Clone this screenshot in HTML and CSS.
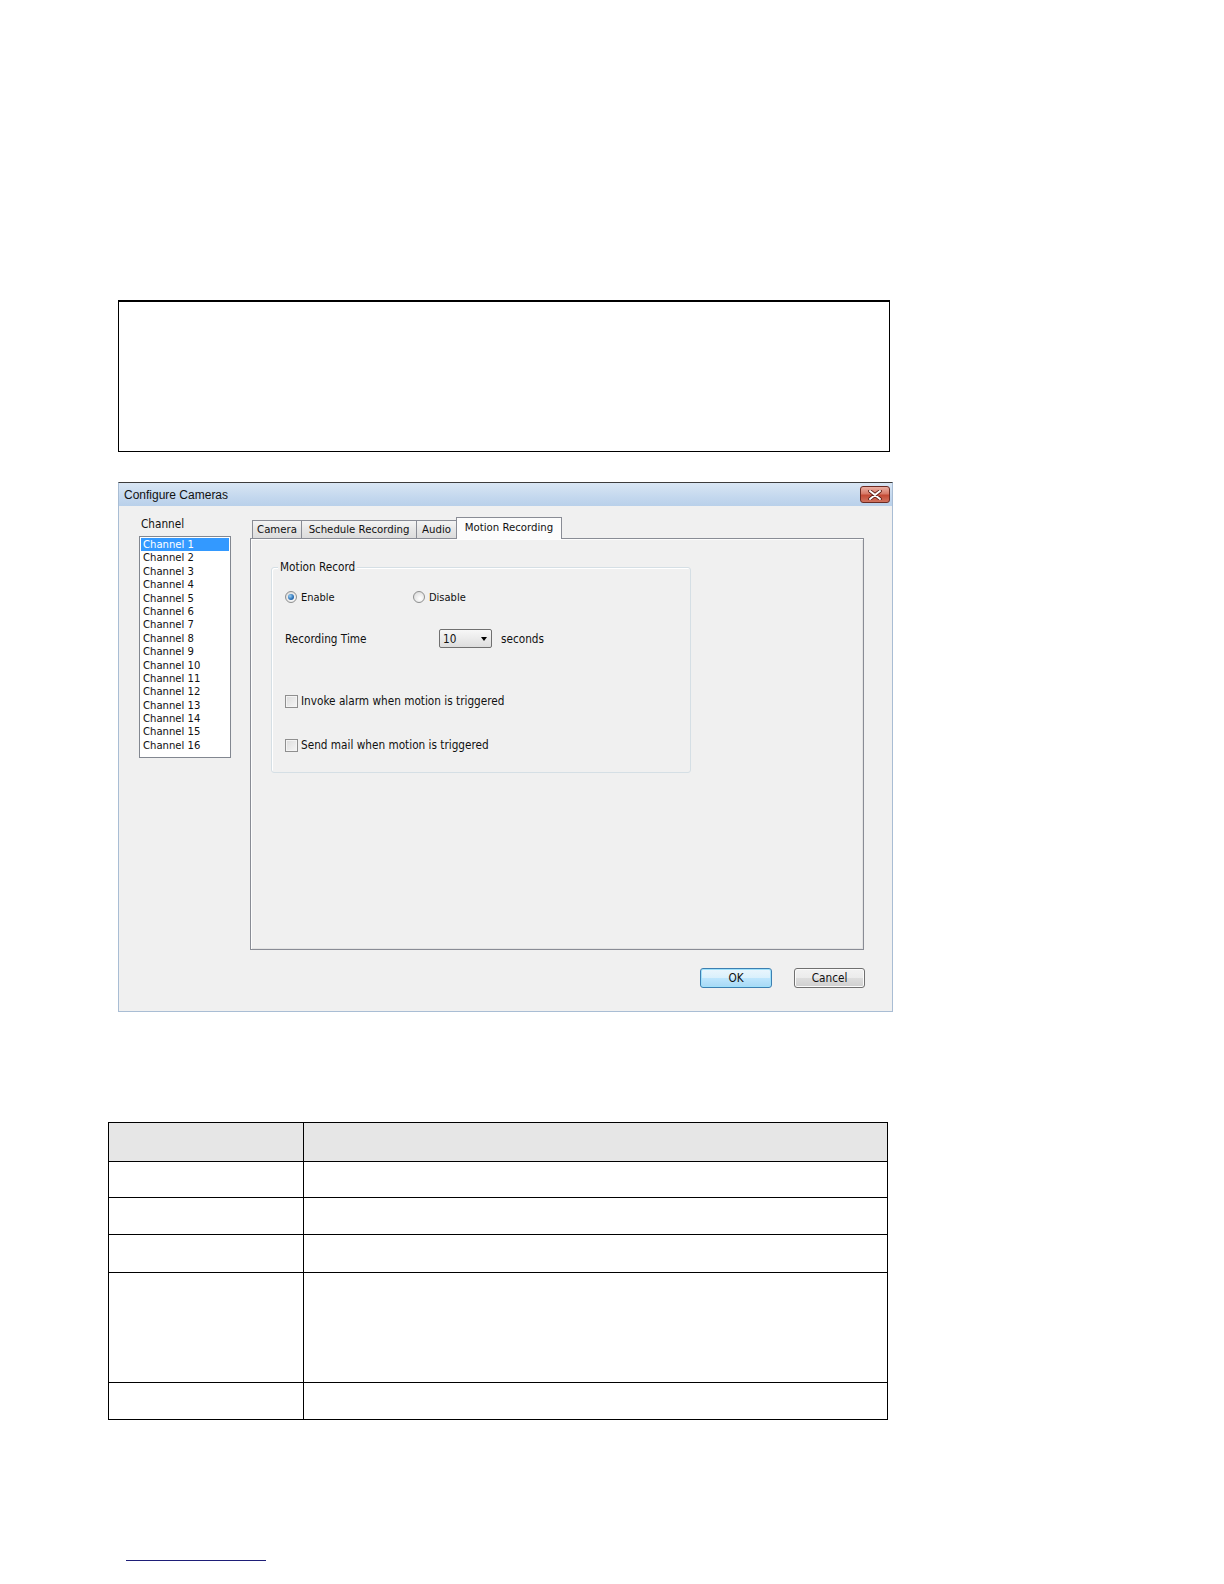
FILE: index.html
```html
<!DOCTYPE html>
<html lang="en">
<head>
<meta charset="utf-8">
<title>Configure Cameras</title>
<link rel="stylesheet" href="styles.css">
</head>
<body>
<div class="page">
  <div class="note-box"></div>

  <div class="dialog">
    <div class="titlebar">
      <span class="title">Configure Cameras</span>
      <span class="close-btn">
        <svg width="14" height="10" viewBox="0 0 14 10" aria-hidden="true">
          <path d="M2 1 L12 9 M12 1 L2 9" stroke="#5a1a12" stroke-width="3.6" stroke-linecap="round"/>
          <path d="M2 1 L12 9 M12 1 L2 9" stroke="#ffffff" stroke-width="2" stroke-linecap="round"/>
        </svg>
      </span>
    </div>
    <div class="dlg-body">
      <div class="main">
        <div class="channel-col">
          <div class="channel-label">Channel</div>
          <ul class="listbox">
            <li class="sel">Channel 1</li>
            <li>Channel 2</li>
            <li>Channel 3</li>
            <li>Channel 4</li>
            <li>Channel 5</li>
            <li>Channel 6</li>
            <li>Channel 7</li>
            <li>Channel 8</li>
            <li>Channel 9</li>
            <li>Channel 10</li>
            <li>Channel 11</li>
            <li>Channel 12</li>
            <li>Channel 13</li>
            <li>Channel 14</li>
            <li>Channel 15</li>
            <li>Channel 16</li>
          </ul>
        </div>
        <div class="tabs-col">
          <div class="tabs">
            <div class="tab tab-camera">Camera</div>
            <div class="tab tab-schedule">Schedule Recording</div>
            <div class="tab tab-audio">Audio</div>
            <div class="tab tab-motion active">Motion Recording</div>
          </div>
          <div class="panel">
            <div class="group">
              <span class="legend">Motion Record</span>
              <div class="radio-row">
                <label class="opt opt-first"><span class="radio checked"></span>Enable</label>
                <label class="opt"><span class="radio"></span>Disable</label>
              </div>
              <div class="time-row">
                <span class="time-label">Recording Time</span>
                <span class="select"><span class="select-val">10</span><span class="arrow"></span></span>
                <span class="unit">seconds</span>
              </div>
              <label class="check-row first-check"><span class="checkbox"></span>Invoke alarm when motion is triggered</label>
              <label class="check-row second-check"><span class="checkbox"></span>Send mail when motion is triggered</label>
            </div>
          </div>
        </div>
      </div>
      <div class="buttons">
        <span class="btn btn-default">OK</span>
        <span class="btn btn-cancel">Cancel</span>
      </div>
    </div>
  </div>

  <table class="spec">
    <tr class="r-head"><th class="c1"></th><th></th></tr>
    <tr class="r1"><td></td><td></td></tr>
    <tr class="r2"><td></td><td></td></tr>
    <tr class="r3"><td></td><td></td></tr>
    <tr class="r4"><td></td><td></td></tr>
    <tr class="r5"><td></td><td></td></tr>
  </table>

  <div class="footnote-rule"></div>
</div>
</body>
</html>
```

FILE: styles.css
```css
* { box-sizing: border-box; }

html, body {
  margin: 0;
  padding: 0;
  background: #ffffff;
}

body {
  width: 1224px;
  height: 1584px;
  overflow: hidden;
  font-family: "Liberation Sans", Arial, sans-serif;
  color: #000;
}

.page {
  padding: 300px 0 0 108px;
}

.note-box {
  margin-left: 10px;
  width: 772px;
  height: 152px;
  border: 1px solid #000;
  border-top-width: 2px;
}

/* ---------- dialog ---------- */
.dialog {
  margin: 30px 0 0 10px;
  width: 775px;
  height: 530px;
  border: 1px solid #a9bdd4;
  border-top-color: #3c3c3c;
  background: #f0f0f0;
  display: flex;
  flex-direction: column;
  font-family: "DejaVu Sans Condensed", "Liberation Sans", sans-serif;
  font-size: 11.7px;
  color: #111;
}

.titlebar {
  flex: none;
  height: 23px;
  display: flex;
  align-items: center;
  justify-content: space-between;
  padding: 0 2px 0 5px;
  background: linear-gradient(#d9e6f4, #c4d8ee 60%, #b9d0ea);
}

.title {
  font-family: "Liberation Sans", Arial, sans-serif;
  font-size: 12px;
}

.close-btn {
  width: 30px;
  height: 17px;
  border: 1px solid #6b2a22;
  border-radius: 3px;
  background: linear-gradient(#eab0a4, #d77a68 45%, #c44a35 55%, #d0735f);
  display: flex;
  align-items: center;
  justify-content: center;
}

.dlg-body {
  flex: 1;
  padding: 11px 27px 0 20px;
  display: flex;
  flex-direction: column;
}

.main {
  display: flex;
  gap: 19px;
}

/* channel list */
.channel-col {
  width: 92px;
  flex: none;
}

.channel-label {
  height: 19px;
  line-height: 14px;
  padding-left: 2px;
}

.listbox {
  margin: 0;
  padding: 1px;
  list-style: none;
  height: 222px;
  border: 1px solid #828790;
  background: #fff;
  font-size: 11.2px;
}

.listbox li {
  height: 13.4px;
  line-height: 13.4px;
  padding-left: 2px;
  white-space: nowrap;
}

.listbox li.sel {
  background: #3399ff;
  color: #fff;
}

/* tabs */
.tabs-col {
  width: 614px;
  flex: none;
}

.tabs {
  position: relative;
  z-index: 1;
  height: 21px;
  display: flex;
  align-items: flex-end;
  padding-left: 2px;
  font-size: 11.3px;
}

.tab {
  height: 18px;
  line-height: 17px;
  text-align: center;
  border: 1px solid #898c95;
  border-bottom: none;
  margin-right: -1px;
  background: linear-gradient(#f4f4f4, #e6e6e6 50%, #dcdcdc);
  white-space: nowrap;
}

.tab-camera { width: 50px; }
.tab-schedule { width: 116px; }
.tab-audio { width: 41px; }
.tab-motion { width: 106px; }

.tab.active {
  height: 22px;
  line-height: 19px;
  margin-bottom: -1px;
  background: #fcfcfc;
}

.panel {
  height: 412px;
  border: 1px solid #898c95;
  background: #f0f0f0;
  box-shadow: inset 1px 1px #fdfdfd, inset -1px -1px #e3e3e3;
  padding: 28px 0 0 20px;
}

.group {
  position: relative;
  width: 420px;
  height: 206px;
  border: 1px solid #d5dfe5;
  border-radius: 3px;
  padding: 21px 0 0 13px;
  box-shadow: 1px 1px #fff inset;
}

.legend {
  position: absolute;
  top: -8px;
  left: 6px;
  padding: 0 2px;
  line-height: 14px;
  background: #f0f0f0;
}

.radio-row {
  display: flex;
  align-items: center;
  height: 16px;
  font-size: 11px;
}

.opt {
  display: flex;
  align-items: center;
  gap: 4px;
}

.opt-first {
  width: 128px;
}

.radio {
  position: relative;
  width: 12px;
  height: 12px;
  border-radius: 50%;
  border: 1px solid #8e8f8f;
  background: radial-gradient(circle at 60% 65%, #ffffff, #e6e6e6 60%, #d0d0d0);
}

.radio.checked::after {
  content: "";
  position: absolute;
  left: 2px;
  top: 2px;
  width: 6px;
  height: 6px;
  border-radius: 50%;
  background: radial-gradient(circle at 35% 35%, #9ad0f4, #2a6fb5 60%, #1c4f8a);
}

.time-row {
  display: flex;
  align-items: center;
  height: 19px;
  margin-top: 24px;
}

.time-label {
  width: 154px;
}

.select {
  width: 53px;
  height: 19px;
  border: 1px solid #707070;
  border-radius: 2px;
  background: linear-gradient(#f7f7f7, #ebebeb 50%, #dddddd);
  display: flex;
  align-items: center;
  justify-content: space-between;
  padding: 0 4px 0 3px;
}

.arrow {
  width: 0;
  height: 0;
  border-left: 3.5px solid transparent;
  border-right: 3.5px solid transparent;
  border-top: 4px solid #000;
}

.unit {
  margin-left: 9px;
}

.check-row {
  display: flex;
  align-items: center;
  gap: 3px;
  height: 14px;
}

.first-check {
  margin-top: 46px;
}

.second-check {
  margin-top: 30px;
}

.checkbox {
  width: 13px;
  height: 13px;
  border: 1px solid #8f8f8f;
  background: linear-gradient(135deg, #dcdcdc, #f6f6f6);
  box-shadow: inset 0 0 0 1px #f4f4f4;
}

/* buttons */
.buttons {
  display: flex;
  justify-content: flex-end;
  gap: 22px;
  margin-top: 18px;
}

.btn {
  height: 20px;
  display: flex;
  align-items: center;
  justify-content: center;
  border-radius: 3px;
}

.btn-default {
  width: 72px;
  border: 1px solid #3c7fb1;
  background: linear-gradient(#eaf6fd, #d9f0fc 50%, #bee6fd 51%, #a7d9f5);
  box-shadow: inset 0 0 0 1px #9fe1fb;
}

.btn-cancel {
  width: 71px;
  border: 1px solid #707070;
  background: linear-gradient(#f2f2f2, #ebebeb 50%, #dddddd 51%, #cfcfcf);
  box-shadow: inset 0 0 0 1px #fbfbfb;
}

/* ---------- table ---------- */
.spec {
  margin-top: 110px;
  width: 780px;
  border-collapse: collapse;
}

.spec th,
.spec td {
  border: 1px solid #000;
  padding: 0;
}

.spec .c1 {
  width: 195px;
}

.spec th {
  background: #e6e6e6;
}

.r-head { height: 39px; }
.r1 { height: 36px; }
.r2 { height: 37px; }
.r3 { height: 38px; }
.r4 { height: 110px; }
.r5 { height: 37px; }

.footnote-rule {
  margin: 140px 0 0 18px;
  width: 140px;
  height: 1px;
  background: #1e1e78;
}
```
